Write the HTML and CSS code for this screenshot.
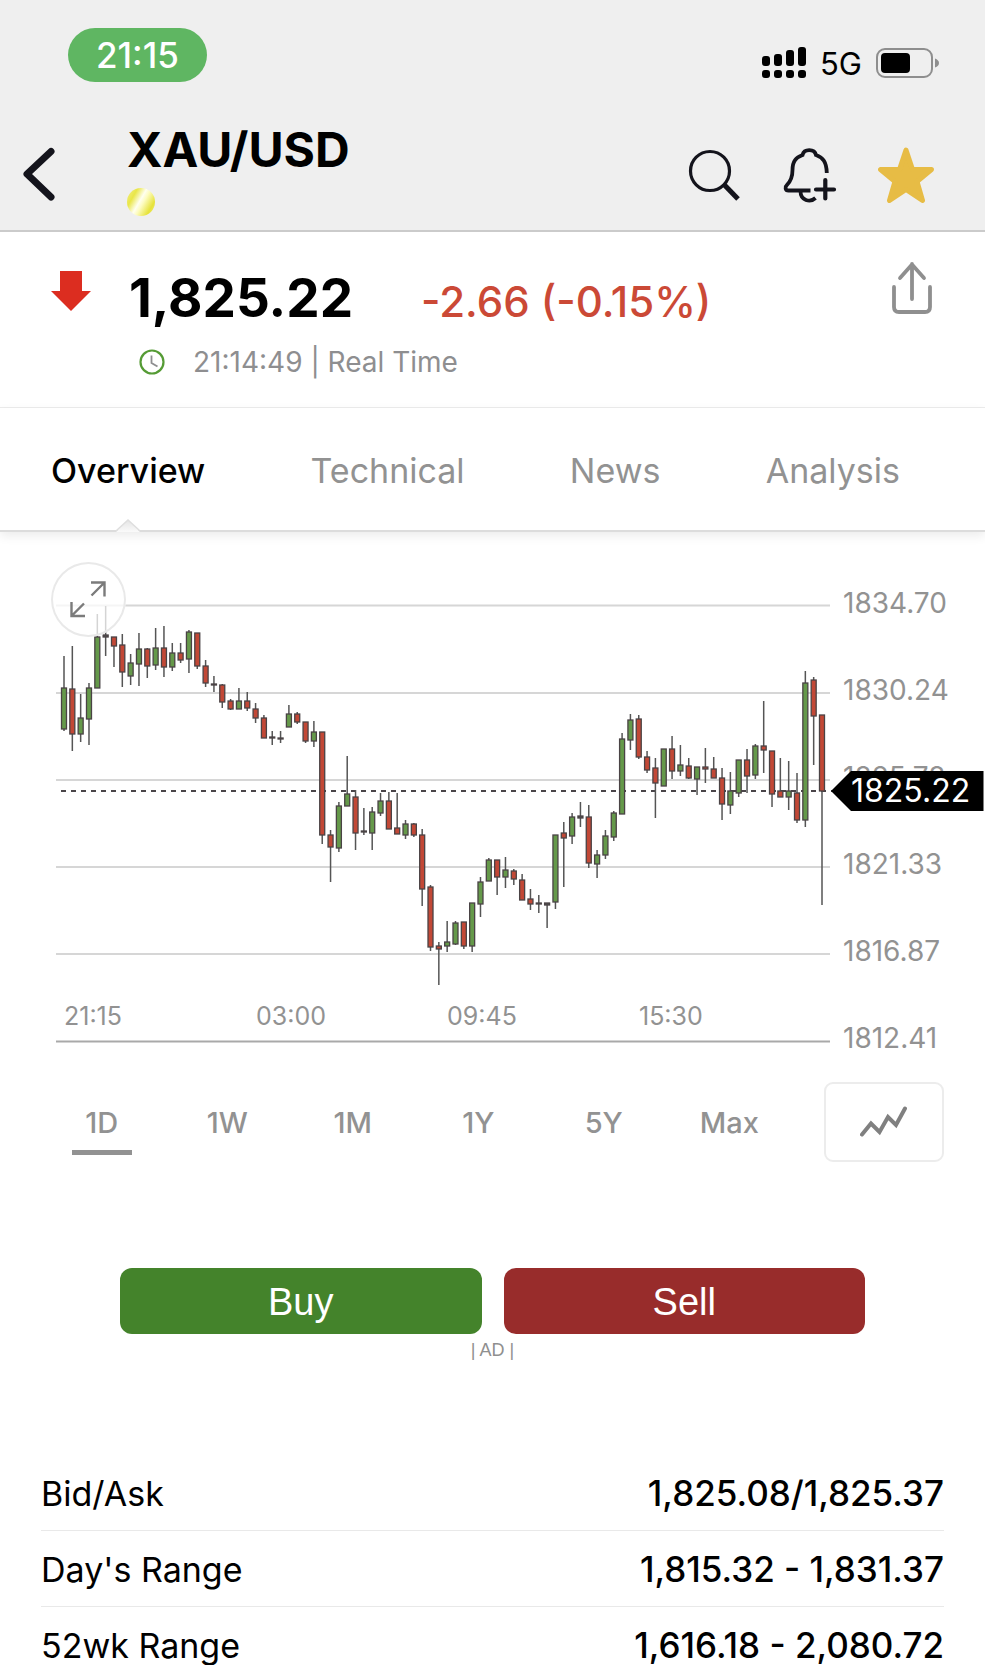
FILE: index.html
```html
<!DOCTYPE html>
<html lang="en">
<head>
<meta charset="utf-8">
<meta name="viewport" content="width=device-width, initial-scale=1">
<title>XAU/USD</title>
<link rel="stylesheet" href="styles.css">
</head>
<body>
<header class="top">
  <div class="status">
    <time class="clock-pill">21:15</time>
    <div class="status-right">
      <svg class="signal" viewBox="0 0 44 32" aria-hidden="true">
        <rect x="0" y="9" width="8" height="10" rx="3"/><rect x="12" y="7" width="8" height="12" rx="3"/><rect x="24" y="3" width="8" height="16" rx="3"/><rect x="36" y="0" width="8" height="19" rx="3"/>
        <rect x="0" y="23" width="8" height="8" rx="3"/><rect x="12" y="23" width="8" height="8" rx="3"/><rect x="24" y="23" width="8" height="8" rx="3"/><rect x="36" y="23" width="8" height="8" rx="3"/>
      </svg>
      <span class="network">5G</span>
      <svg class="battery" viewBox="0 0 63 30" aria-hidden="true">
        <rect x="1" y="1" width="55" height="28" rx="8" fill="none" stroke="#8e8e8e" stroke-width="2"/>
        <rect x="5" y="5" width="29" height="20" rx="4"/>
        <path d="M59 10.500C61.500 11.500 63 13 63 15S61.500 18.500 59 19.500Z" fill="#8e8e8e"/>
      </svg>
    </div>
  </div>
  <nav class="nav">
    <button class="icon-btn back" aria-label="Back"><svg viewBox="0 0 32 56" width="32" height="56"><path d="M28 4.500 4 27 28 50" fill="none" stroke="#14141c" stroke-width="7" stroke-linecap="round" stroke-linejoin="round"/></svg></button>
    <div class="titles">
      <h1>XAU/USD</h1>
      <span class="coin"></span>
    </div>
    <div class="actions">
      <button class="icon-btn" aria-label="Search"><svg viewBox="0 0 56 56" width="56" height="56"><circle cx="24" cy="24" r="19.500" fill="none" stroke="#14141c" stroke-width="3.200"/><path d="M37.500 37 52 52" stroke="#14141c" stroke-width="5"/></svg></button>
      <button class="icon-btn" aria-label="Add alert"><svg viewBox="0 0 56 56" width="56" height="56" fill="none" stroke="#14141c" stroke-width="3.800"><path d="M28.500 43.500H6.500C3.200 43.500 2.600 40 5 37.800C9 34 10.500 30 10.500 23C10.500 14 14 10.500 20.500 8C22 1.500 32.500 1.500 34 8C41 10.500 44.500 15 44.800 26"/><path d="M18.500 44C18.500 53.500 28 56 33.500 51"/><path d="M43.300 33V51.500M34 42.500H52" stroke-width="4.200" stroke-linecap="round"/></svg></button>
      <button class="icon-btn" aria-label="Favourite"><svg viewBox="0 0 56 56" width="56" height="56"><path d="M28 3 34.500 22.500H53.500L39 34.500 44.500 53.500 28 42.500 11.500 53.500 17 34.500 2.500 22.500H21.500Z" fill="#e7bc45" stroke="#e7bc45" stroke-width="5" stroke-linejoin="round"/></svg></button>
    </div>
  </nav>
</header>

<main>
  <section class="quote">
    <svg class="down" viewBox="0 0 40 40" aria-label="Down"><path d="M9 0H31V20H40L20 40 0 20H9Z" fill="#dc2d20"/></svg>
    <div class="figures">
      <div class="prices"><span class="price">1,825.22</span><span class="change">-2.66 (-0.15%)</span></div>
      <div class="meta">
        <svg viewBox="0 0 26 26" width="26" height="26" aria-hidden="true" fill="none"><circle cx="13" cy="13" r="11.500" stroke="#559b35" stroke-width="2.200"/><path d="M12.500 6.500V14L18.500 17.500" stroke="#8e8e90" stroke-width="1.800"/></svg>
        <span>21:14:49 | Real Time</span>
      </div>
    </div>
    <button class="icon-btn share" aria-label="Share"><svg viewBox="0 0 42 54" width="42" height="54" fill="none" stroke="#8f8f8f" stroke-width="3.800" stroke-linecap="round" stroke-linejoin="round"><path d="M3 26V46Q3 51 8 51H34Q39 51 39 46V26M21 38V3M9 17 21 3.500 33 17"/></svg></button>
  </section>

  <nav class="tabs">
    <a href="#overview" class="tab active" aria-current="page">Overview<svg class="notch" viewBox="0 0 24 13" width="24" height="13" aria-hidden="true"><defs><linearGradient id="notch-fill" x1="0" y1="0" x2="0" y2="1"><stop offset="0" stop-color="#e4e4e4"/><stop offset="1" stop-color="#fafafa"/></linearGradient></defs><path d="M0 13 12 1 24 13Z" fill="url(#notch-fill)"/><path d="M0 12 12 1 24 12" fill="none" stroke="#dedede" stroke-width="1.500"/></svg></a>
    <a href="#technical" class="tab">Technical</a>
    <a href="#news" class="tab">News</a>
    <a href="#analysis" class="tab">Analysis</a>
  </nav>

  <section class="chart" id="overview">
    <svg class="plot" viewBox="0 531 985 530" role="img" aria-label="XAU/USD candlestick chart">
      <g class="grid">
        <path d="M56 604.500H830M56 692H830M56 779H830M56 866H830M56 953H830"/>
        <path class="base" d="M56 1040.500H830"/>
      </g>
      <path class="last-line" d="M61 790H832"/>
      <g id="candles"></g>
      <g class="y-labels">
        <text x="843" y="612">1834.70</text><text x="843" y="699">1830.24</text><text x="843" y="786">1825.78</text><text x="843" y="873">1821.33</text><text x="843" y="960">1816.87</text><text x="843" y="1047">1812.41</text>
      </g>
      <g class="x-labels">
        <text x="64" y="1024">21:15</text><text x="256" y="1024">03:00</text><text x="447" y="1024">09:45</text><text x="639" y="1024">15:30</text>
      </g>
      <path d="M831 790 851 770H983.500V810H851Z"/>
      <text class="last-price" x="851" y="801">1825.22</text>
    </svg>
    <button class="expand" aria-label="Expand chart"><svg viewBox="0 0 75 75" width="75" height="75" fill="none" stroke="#7b7b7b" stroke-width="2.400"><path d="M40 20.500H53.500V34.500M40.500 33.500 53 21M20.500 40V54H34M21 53.500 33 41.500"/></svg></button>
  </section>

  <div class="ranges">
    <button class="range selected">1D</button>
    <button class="range">1W</button>
    <button class="range">1M</button>
    <button class="range">1Y</button>
    <button class="range">5Y</button>
    <button class="range">Max</button>
    <button class="chart-type" aria-label="Line chart"><svg viewBox="0 0 48 32" width="48" height="32"><path d="M2 28.500 11 17.500 19.500 26 28 11 36 19 45 2.500" fill="none" stroke="#808080" stroke-width="4" stroke-linecap="round"/></svg></button>
  </div>

  <section class="trade">
    <div class="trade-buttons">
      <button class="trade-btn buy">Buy</button>
      <button class="trade-btn sell">Sell</button>
    </div>
    <small class="ad">| AD |</small>
  </section>

  <table class="stats">
    <tbody>
      <tr><th scope="row">Bid/Ask</th><td>1,825.08/1,825.37</td></tr>
      <tr><th scope="row">Day's Range</th><td>1,815.32 - 1,831.37</td></tr>
      <tr><th scope="row">52wk Range</th><td>1,616.18 - 2,080.72</td></tr>
    </tbody>
  </table>
</main>
<script src="chart.js"></script>
</body>
</html>
```
FILE: styles.css
```css
* { box-sizing: border-box; }

body {
  margin: 0;
  background: #fff;
  color: #000;
  font-family: Inter, "Liberation Sans", sans-serif;
}

button {
  margin: 0;
  padding: 0;
  border: 0;
  background: none;
  color: inherit;
  font: inherit;
}

svg { display: block; }

.top {
  background: #efefef;
  border-bottom: 2px solid #cbcbcb;
}

.status {
  display: flex;
  justify-content: space-between;
  align-items: center;
  padding: 27px 46px 0 68px;
}

.clock-pill {
  padding: 0 28px;
  border-radius: 27px;
  background: #5fb662;
  color: #fff;
  font-size: 35px;
  font-weight: 500;
  line-height: 54px;
}

.status-right {
  display: flex;
  align-items: center;
  gap: 14px;
  padding-top: 16px;
}

.signal { width: 44px; height: 32px; }
.battery { width: 63px; height: 30px; }
.network { padding-top: 3px; font-size: 31px; line-height: 36px; }

.nav {
  display: flex;
  align-items: center;
  padding: 38px 51px 14px 23px;
}

.icon-btn { flex: none; }
.back { margin-top: 14px; }

.titles {
  flex: 1;
  display: flex;
  flex-direction: column;
  gap: 8px;
  padding-left: 72px;
}

h1 {
  margin: 0;
  font-size: 48px;
  font-weight: 700;
  line-height: 60px;
}

.coin {
  width: 28px;
  height: 28px;
  border-radius: 50%;
  background: linear-gradient(120deg, #f3ef8e 0%, #e9e648 25%, #fffff0 46%, #fdfcc0 56%, #e6e23a 80%, #f0ec80 100%);
}

.actions { display: flex; gap: 40px; margin-top: 14px; }

.quote {
  display: flex;
  align-items: flex-start;
  padding: 34px 52px 25px 51px;
  border-bottom: 1px solid #ececec;
}

.down { flex: none; width: 40px; height: 40px; margin-top: 5px; }
.figures { flex: 1; padding-left: 38px; }

.prices {
  display: flex;
  align-items: baseline;
  gap: 68px;
  line-height: 64px;
}

.price { font-size: 53px; font-weight: 700; }
.change { color: #cb4936; font-size: 42px; font-weight: 500; }

.meta {
  display: flex;
  align-items: center;
  gap: 28px;
  margin-top: 8px;
  padding-left: 10px;
  color: #8e8e90;
  font-size: 28px;
  line-height: 40px;
}

.share { margin-top: -5px; }

.tabs {
  display: flex;
  justify-content: space-between;
  padding: 0 85px 0 51px;
  border-bottom: 2px solid #dcdcdc;
  box-shadow: 0 4px 10px rgba(0, 0, 0, 0.08);
}

.tab {
  position: relative;
  padding: 42px 0 38px;
  color: #929292;
  font-size: 34px;
  line-height: 42px;
  text-decoration: none;
}

.tab.active { color: #000; font-weight: 500; }

.notch {
  position: absolute;
  left: 50%;
  bottom: -2px;
  margin-left: -12px;
}

.chart { position: relative; }
.plot { width: 100%; height: auto; }

.grid path { stroke: #d6d6d6; stroke-width: 2; }
.grid .base { stroke: #a9a9a9; }
.last-line { stroke: #4a4549; stroke-width: 2; stroke-dasharray: 5 5; }
.wick { stroke: #555; stroke-width: 1.5; }
.body { stroke: #4a4345; stroke-width: 1.3; }
.up { fill: #65994a; }
.fall { fill: #c24836; }
.flat { fill: #555; }
.y-labels text { fill: #929292; font-size: 28px; }
.x-labels text { fill: #929292; font-size: 25px; }
.last-price { fill: #fff; font-size: 32px; }

.expand {
  position: absolute;
  left: 51px;
  top: 30px;
  width: 75px;
  height: 75px;
  border-radius: 50%;
  background: rgba(255, 255, 255, 0.75);
  box-shadow: inset 0 0 0 2px #e9e9e9;
}

.ranges {
  display: flex;
  align-items: stretch;
  padding: 20px 41px 0 39px;
}

.range {
  position: relative;
  flex: 1;
  color: #929292;
  font-size: 29px;
  font-weight: 500;
}

.range.selected::after {
  content: "";
  position: absolute;
  left: 50%;
  bottom: 7px;
  width: 60px;
  height: 5px;
  margin-left: -30px;
  background: #929292;
}

.chart-type {
  display: flex;
  align-items: center;
  justify-content: center;
  width: 120px;
  height: 80px;
  margin-left: 32px;
  border: 2px solid #ececec;
  border-radius: 9px;
}

.trade {
  padding: 106px 120px 0;
  text-align: center;
  font-family: "Liberation Sans", sans-serif;
}

.trade-buttons { display: flex; gap: 22px; }

.trade-btn {
  flex: 1;
  padding-top: 2px;
  border-radius: 12px;
  color: #fff;
  font-size: 38px;
  line-height: 64px;
}

.buy { background: #44832b; }
.sell { background: #982c2b; }

.ad {
  display: block;
  margin-top: 4px;
  color: #8f8f8f;
  font-size: 18px;
  line-height: 24px;
}

.stats {
  width: calc(100% - 82px);
  margin: 93px 41px 0;
  border-collapse: collapse;
  font-size: 34px;
  line-height: 41px;
}

.stats th, .stats td { padding: 18px 0 16px; border-bottom: 1px solid #e9e9e9; }
.stats th { font-weight: 400; text-align: left; }
.stats td { font-size: 35px; font-weight: 500; text-align: right; }
.stats tr:last-child th, .stats tr:last-child td { padding-bottom: 0; border: 0; }
```
FILE: chart.js
```js
// Each candle: direction (g up, r down, k flat), high, body top, body bottom, low.
const data = `g655,687,728,730 r645,688,733,750 g693,717,733,741 g682,687,718,744 g613,636,687,687 k605,634,636,655
r636,636,645,666 r633,644,671,686 g653,662,675,684 g632,648,663,685 r647,648,665,677 g627,647,664,669
r625,647,666,676 g642,652,666,670 r642,652,659,662 g629,631,658,672 r632,632,665,668 r659,665,682,686
k675,683,684,691 r683,684,701,707 r698,700,708,709 g687,700,708,708 r691,700,707,710 r702,708,717,722
r714,717,737,737 k730,736,737,744 k730,737,738,742 g704,713,726,726 r711,713,721,723 r721,721,740,742
g720,731,740,746 r731,731,834,843 r829,834,846,881 g801,805,847,851 g755,793,805,805 r789,796,832,849
k807,830,831,834 g806,811,832,849 g792,800,812,815 r791,800,828,828 r792,827,833,833 g819,823,834,838
r822,823,834,836 r828,834,888,905 r884,886,946,950 r941,945,948,984 g920,941,945,951 g920,922,943,944
r921,921,945,948 g902,902,945,951 g876,881,903,916 g857,859,880,880 r859,859,876,894 g856,869,876,887
r868,870,878,884 r873,879,899,899 r888,898,903,909 k894,902,903,912 k902,902,904,927 g834,834,901,908
r821,832,837,886 g812,816,835,843 k801,815,817,826 r804,816,862,867 g849,854,863,877 g829,835,854,858
g810,812,836,840 g732,738,813,813 g713,719,739,749 r714,718,756,758 r750,756,769,772 r757,767,782,817
g748,748,785,785 r735,748,770,778 g744,764,770,775 r757,765,777,778 g766,766,778,794 r747,766,768,782
r756,768,777,777 r767,777,803,819 g771,790,804,813 g759,759,792,796 r748,759,775,792 g743,745,774,778
r700,745,749,772 r750,750,793,806 r757,790,796,796 g760,790,796,809 r772,792,819,822 g670,682,819,826
r676,679,715,764 r714,714,790,904`.split(/\s+/);

const kinds = { g: "up", r: "fall", k: "flat" };
const first = 64;
const step = 758 / (data.length - 1);

document.getElementById("candles").innerHTML = data.map((item, i) => {
  const [high, top, bottom, low] = item.slice(1).split(",").map(Number);
  const x = first + i * step;
  return `<path class="wick" d="M${x} ${high}V${low}"/>` +
    `<rect class="body ${kinds[item[0]]}" x="${x - 2.5}" y="${top}" width="5" height="${bottom - top}"/>`;
}).join("");
```
